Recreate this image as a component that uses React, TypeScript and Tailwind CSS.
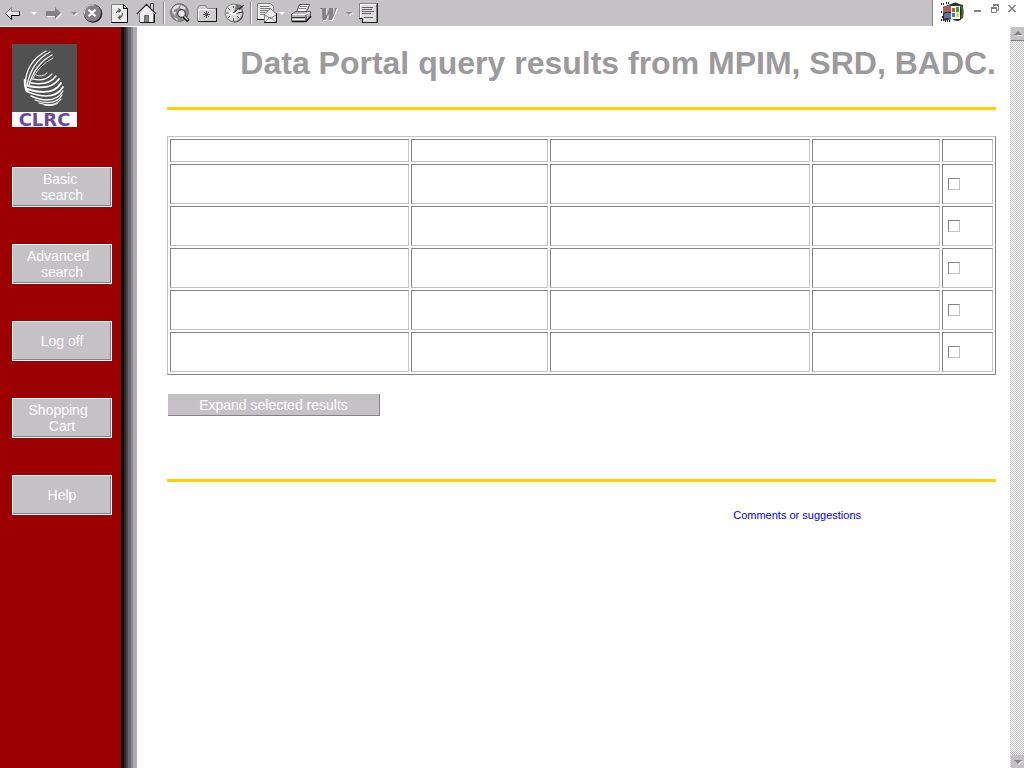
import React from "react";

type IconProps = { x: number; w: number; children: React.ReactNode };

/* Icons share the toolbar's coordinate space: x is where the button starts. */
function ToolButton({ x, w, label, children }: IconProps & { label: string }) {
  return (
    <button type="button" aria-label={label} className="h-[26px] shrink-0">
      <svg width={w} height={26} viewBox={`${x} 0 ${w} 26`} className="block">
        {children}
      </svg>
    </button>
  );
}

function Separator() {
  return (
    <div className="flex h-[26px] w-[6px] shrink-0 justify-center py-[2px]">
      <div className="w-px bg-[#848284]" />
      <div className="w-px bg-white" />
    </div>
  );
}

function Toolbar() {
  return (
    <header className="flex h-[27px] shrink-0 justify-between overflow-hidden border-b border-white bg-white">
      <div className="flex grow items-start border-r border-[#848284] bg-[#c5c2c5]" role="toolbar" aria-label="Browser">
        <ToolButton label="Back" x={0} w={27}>
          <path d="M5.5 13.5 L11.5 7.5 V11.5 H19.5 V15.5 H11.5 V19.5 Z" fill="#e8e8e8" stroke="#848284" />
          <path d="M5.5 13.5 L11.5 19.5 V15.5 H19.5 V11.5" fill="none" stroke="#000" />
        </ToolButton>
        <ToolButton label="Back history" x={27} w={13}>
          <path d="M31 12 H37 L34 15 Z" fill="#fff" />
        </ToolButton>
        <ToolButton label="Forward" x={40} w={27}>
          <path d="M47 12 H56 V8 L62 14 L56 20 V17 H47 Z" fill="#fff" />
          <path d="M46 11 H55 V7 L61 13 L55 19 V16 H46 Z" fill="#848284" />
        </ToolButton>
        <ToolButton label="Forward history" x={67} w={13}>
          <path d="M72 13 H78 L75 16 Z" fill="#fff" />
          <path d="M71 12 H77 L74 15 Z" fill="#848284" />
        </ToolButton>
        <ToolButton label="Stop" x={80} w={27}>
          <circle cx="93" cy="13.5" r="9.3" fill="#222" />
          <circle cx="92.3" cy="12.8" r="8.7" fill="#848284" />
          <path d="M84.5 14 A8 8 0 0 1 94 5" stroke="#ddd" fill="none" />
          <path d="M88.5 9.5 L95.5 16.5 M95.5 9.5 L88.5 16.5" stroke="#fff" strokeWidth="2.2" />
        </ToolButton>
        <ToolButton label="Refresh" x={107} w={27}>
          <path d="M111.5 4.5 H123.5 L127.5 8.5 V22.5 H111.5 Z" fill="#eee" stroke="#848284" />
          <path d="M111.5 22.5 H127.5 V8.5 H123.5 V4.5 L127.5 8.5" fill="none" stroke="#000" />
          <path d="M116.5 13 Q116.500 10.500 120 10.500 M118.500 8.500 L120.500 10.500 L118.500 12.500 M122.500 13 Q122.500 17.500 119 17.500 M120.500 15.500 L118.500 17.500 L120.500 19.500" fill="none" stroke="#555" strokeWidth="1.2" />
        </ToolButton>
        <ToolButton label="Home" x={134} w={27}>
          <path d="M150.5 10 V3.5 H153.5 V13" fill="#ddd" stroke="#444" />
          <path d="M139.5 13 V22.5 H153.5 V13 L146.5 5 Z" fill="#eee" stroke="#777" />
          <path d="M137 14 L146.5 4.5 L156 14" fill="none" stroke="#333" strokeWidth="1.5" />
          <path d="M139 13.500 L146.5 6 L154 13.500" fill="none" stroke="#fff" />
          <path d="M144.5 22 V15.5 H148.5 V22" fill="#848284" stroke="#666" />
          <path d="M154.5 14 V22.500 H140" fill="none" stroke="#111" />
        </ToolButton>
        <Separator />
        <ToolButton label="Search" x={167} w={27}>
          <circle cx="179.5" cy="12.5" r="8.8" fill="#8e8e8e" stroke="#666" />
          <path d="M172 9 Q176 4 180 5 L178 8 L174 10 L173 15 Z M181 5 L186 8 L184 10 L180 8 Z M174 17 L178 19 L177 21 Z M173 12 L176 12 L175 16 Z" fill="#ddd" />
          <path d="M184 16.500 L188.5 21" stroke="#000" strokeWidth="3.5" />
          <path d="M184 16 L188 20" stroke="#fff" strokeWidth="1.5" />
          <circle cx="181.5" cy="13.500" r="3.8" fill="#e7e7e7" stroke="#444" strokeWidth="1.2" />
        </ToolButton>
        <ToolButton label="Favorites" x={194} w={27}>
          <path d="M197.5 21.5 V8.5 L199.5 5.5 H205.5 L207.5 8.5 H216.5 V21.5 Z" fill="#cfcfcf" stroke="#848284" />
          <path d="M198.5 20 V9.5 H215" fill="none" stroke="#fff" />
          <path d="M198 21.5 H216.5 V8" fill="none" stroke="#111" />
          <path d="M206.5 11 V18 M203 14.5 H210 M204 12 L209 17 M209 12 L204 17" stroke="#555" />
        </ToolButton>
        <ToolButton label="History" x={221} w={27}>
          <circle cx="234.5" cy="13.5" r="9" fill="#333" />
          <circle cx="233.8" cy="12.8" r="8.7" fill="#ddd" stroke="#848284" />
          <path d="M234 13 L236 4 Q242 4 243 8 Z" fill="#777" />
          <path d="M233 13.500 L244 5 M233 14 L243 12" stroke="#222" strokeWidth="1.2" />
          <path d="M233.5 6 V8 M226 13 H229 M233.5 18 V21 M228 8 L230 10 M228 18 L230 16 M239 18 L237 16" stroke="#666" />
          <path d="M229 12 L234 14.500 L239 10" fill="none" stroke="#fff" strokeWidth="2" />
        </ToolButton>
        <Separator />
        <ToolButton label="Mail" x={254} w={24}>
          <path d="M257.5 3.5 H270.5 L273.5 6.5 V19.5 H257.5 Z" fill="#eee" stroke="#848284" />
          <path d="M260 6.5 H269 M260 8.5 H271 M260 10.5 H268 M260 12.5 H265 M260 14.5 H264" stroke="#777" />
          <path d="M257 19.500 H264" stroke="#222" />
          <path d="M264.5 14 L270.5 8.5 L276.5 14 V22.5 H264.5 Z" fill="#eee" stroke="#848284" />
          <path d="M265 15 L270.5 18.5 L276 15 M265 22 L270 17 L276 22" fill="none" stroke="#888" />
          <path d="M264 22.5 H276.5 V13" fill="none" stroke="#000" />
        </ToolButton>
        <ToolButton label="Mail menu" x={278} w={10}>
          <path d="M279 12 H285 L282 15 Z" fill="#fff" />
        </ToolButton>
        <ToolButton label="Print" x={288} w={27}>
          <path d="M296.5 12 L299.5 4.5 H309.5 L306.5 12 Z" fill="#fff" stroke="#555" />
          <path d="M300 6.5 H307 M299 8.5 H306" stroke="#848284" />
          <path d="M291.5 14 L296 11.5 H310.5 V17 L306 21.5 H291.5 Z" fill="#bbb" stroke="#555" />
          <path d="M292 14.5 H305 L310 12 M292 19.5 H305" fill="none" stroke="#fff" />
          <path d="M292 17.5 H305 M306 15 V21" fill="none" stroke="#333" />
          <path d="M292 21.5 H306 L311 16" fill="none" stroke="#111" strokeWidth="1.5" />
        </ToolButton>
        <ToolButton label="Edit" x={315} w={27}>
          <path d="M321 9 H327 L327 16 L330 9 H332 L333 16 L336 9 H338 L333 21 H329 L328 17 L326 21 H323 Z" fill="#fff" />
          <path d="M320 8 H326 V9 L326.5 16 L329 9 V8 H333 V9 L333 16 L335 9 V8 H337 L332 20 H328.5 V14 L326 20 H322.5 L321.5 9 H320 Z" fill="#848284" />
        </ToolButton>
        <ToolButton label="Edit menu" x={342} w={13}>
          <path d="M347 13 H353 L350 16 Z" fill="#fff" />
          <path d="M346 12 H352 L349 15 Z" fill="#848284" />
        </ToolButton>
        <ToolButton label="Discuss" x={355} w={27}>
          <path d="M359.5 3.5 H376.5 V22.5 H363 L359.5 19 Z" fill="#ddd" stroke="#848284" />
          <path d="M360.5 18 V4.5 H376" fill="none" stroke="#fff" />
          <path d="M362 7.5 H373 M362 9.5 H372 M362 11.5 H374 M362 13.5 H371 M364 17.5 H373" stroke="#666" />
          <path d="M362 22.5 H377.5 V3 M359 18.5 H362.5 V22" fill="none" stroke="#222" />
        </ToolButton>
      </div>
      <div className="flex w-[91px] shrink-0">
        <svg width={37} height={26} viewBox="933 0 37 26" className="block">
          <path d="M951 4 Q956 1 959 4 L963 5 V17 Q959 24 952 19 L943 21 V7 Z" fill="#2a3326" />
          <path d="M941 4 H944 M943 8 H946 M941 12 H945 M942 17 H946 M941 20 H944 M946 3 H950 M945 21 H951" stroke="#202050" strokeWidth="2" strokeDasharray="1 1" />
          <path d="M943 8 Q947 4 951 6 V12 Q947 11 943 13 Z" fill="#a8625a" />
          <path d="M944 14 Q947 12 951 13 V19 Q947 17 944 19 Z" fill="#6272a0" />
          <path d="M951 6 H960 V19 H951 Z" fill="#fff" />
          <path d="M952 8 H955 V12 H952 Z" fill="#f04410" />
          <path d="M956 7 H959 V12 H956 Z" fill="#23a83d" />
          <path d="M952 13 H955 V17 H952 Z" fill="#1689d5" />
          <path d="M956 13 H959 V17 H956 Z" fill="#f5d50b" />
          <path d="M961 6 Q964 9 962 18" fill="none" stroke="#4c6c40" strokeWidth="2" />
        </svg>
        <ToolButton label="Minimize" x={970} w={16}>
          <path d="M974 11 H981" stroke="#848284" strokeWidth="2" />
        </ToolButton>
        <ToolButton label="Restore" x={986} w={16}>
          <path d="M993.5 7 V5 H998.5 V10.5 H997" fill="none" stroke="#848284" />
          <path d="M991.5 8 V12.5 H996.5 V8" fill="none" stroke="#848284" />
          <path d="M991 8 H997 M993 5 H999" stroke="#848284" strokeWidth="2" />
        </ToolButton>
        <ToolButton label="Close" x={1002} w={22}>
          <path d="M1008.5 5 L1015.5 12 M1015.5 5 L1008.5 12" stroke="#848284" strokeWidth="1.6" />
        </ToolButton>
      </div>
    </header>
  );
}

function Logo() {
  return (
    <div className="w-[65px] bg-white">
      <svg width={65} height={68} viewBox="12 44 65 68" aria-hidden="true" className="block bg-[#525152]">
        <g fill="none" stroke="#fff" strokeLinecap="round">
          <path d="M46 51 Q26 62 25 85" strokeWidth="1.3" />
          <path d="M50 52 Q31 62 27 86" strokeWidth="1.4" />
          <path d="M52 55 Q35 64 29 85" strokeWidth="1.3" />
          <path d="M53 58 Q38 66 32 80" strokeWidth="0.8" />
          <path d="M25 80 Q25 88 27 91" strokeWidth="2.5" />
          <path d="M36 75 Q42 78 47 73" strokeWidth="0.9" />
          <path d="M33 79 Q45 82 52 74" strokeWidth="1.2" />
          <path d="M31 83 Q49 86 56 76" strokeWidth="1.5" />
          <path d="M28 86 Q51 91 59 79" strokeWidth="1.8" />
          <path d="M27 89 Q53 97 61 83" strokeWidth="1.9" />
          <path d="M28 92 Q54 102 63 87" strokeWidth="1.7" />
          <path d="M31 96 Q54 106 63 91" strokeWidth="1.4" />
          <path d="M35 100 Q55 107 62 95" strokeWidth="1.2" />
          <path d="M39 103 Q54 108 61 99" strokeWidth="1.1" />
          <path d="M44 105 Q53 107 58 103" strokeWidth="0.9" />
        </g>
      </svg>
      <div className="text-center font-['DejaVu_Sans',sans-serif] text-[18px] leading-[15px] font-bold text-[#6b499c]">
        CLRC
      </div>
    </div>
  );
}

const navItems = ["Basic\u00a0\nsearch", "Advanced\u00a0\u00a0\nsearch", "Log off", "Shopping\u00a0\u00a0\nCart", "Help"];

function Sidebar() {
  return (
    <div className="flex shrink-0">
      <nav className="flex w-[121px] flex-col items-start bg-[#9c0000] pt-[17px] pl-3">
        <Logo />
        <div className="mt-10 flex flex-col gap-[37px]">
          {navItems.map((label) => (
            <button
              key={label}
              type="button"
              className="flex h-10 w-[100px] items-center justify-center border border-white bg-[#c5c2c5] text-center text-[14px] leading-4 whitespace-pre text-white shadow-[inset_-1px_-1px_0_#848284]"
            >
              {label}
            </button>
          ))}
        </div>
      </nav>
      <div className="w-[3px] bg-[#080808]" />
      <div className="w-[2px] bg-[#292829]" />
      <div className="w-[2px] bg-[#4a494a]" />
      <div className="w-[3px] bg-[#6b696b]" />
      <div className="w-[2px] bg-[#8c8a8c]" />
      <div className="w-[4px] bg-[#adaaad]" />
    </div>
  );
}

const cell = "border border-t-[#848284] border-r-[#c5c2c5] border-b-[#c5c2c5] border-l-[#848284]";

function Results() {
  return (
    <table className="mt-[26px] w-full table-fixed border-separate border-spacing-[2px] border border-t-[#c5c2c5] border-r-[#848284] border-b-[#848284] border-l-[#c5c2c5]">
      <colgroup>
        <col className="w-[239px]" />
        <col className="w-[137px]" />
        <col />
        <col className="w-[128px]" />
        <col className="w-[51px]" />
      </colgroup>
      <thead>
        <tr className="h-[23px]">
          {[0, 1, 2, 3, 4].map((c) => (
            <th key={c} className={cell} />
          ))}
        </tr>
      </thead>
      <tbody>
        {[1, 2, 3, 4, 5].map((row) => (
          <tr key={row} className="h-10">
            {[0, 1, 2, 3].map((c) => (
              <td key={c} className={cell} />
            ))}
            <td className={`${cell} pl-[5px] align-middle`}>
              <input
                type="checkbox"
                aria-label={`Select result ${row}`}
                className="block size-3 appearance-none border border-t-[#848284] border-r-[#c5c2c5] border-b-[#c5c2c5] border-l-[#848284] bg-white checked:bg-[#848284]"
              />
            </td>
          </tr>
        ))}
      </tbody>
    </table>
  );
}

function ScrollBar() {
  return (
    <div className="flex w-[14px] shrink-0 flex-col items-end justify-between bg-[repeating-conic-gradient(#c5c2c5_0_25%,#fff_0_50%)] bg-[length:2px_2px]">
      <button type="button" aria-label="Scroll up" className="h-[14px] w-[13px] border-b border-[#848284] bg-[#c5c2c5]">
        <svg width={13} height={13} viewBox="0 0 13 13" className="block">
          <path d="M4 9 H12 L11 8 Z" fill="#fff" />
          <path d="M3 8 H11 L7 4 Z" fill="#848284" />
        </svg>
      </button>
      <button type="button" aria-label="Scroll down" className="h-[13px] w-[13px] bg-[#c5c2c5]">
        <svg width={13} height={13} viewBox="0 0 13 13" className="block">
          <path d="M4 6 H12 L8 10 Z" fill="#fff" />
          <path d="M3 5 H11 L7 9 Z" fill="#848284" />
        </svg>
      </button>
    </div>
  );
}

export default function App() {
  return (
    <div className="flex min-h-screen flex-col bg-white font-['Liberation_Sans',Arial,sans-serif]">
      <Toolbar />
      <div className="flex grow">
        <Sidebar />
        <main className="min-w-0 grow pr-[14px] pl-[30px]">
          <h1 className="pt-4 text-right text-[32px] leading-10 font-bold text-[#9c9a9c]">
            Data Portal query results from MPIM, SRD, BADC.
          </h1>
          <hr className="mt-6 border-t-[3px] border-[#ffcf00]" />
          <Results />
          <button
            type="button"
            className="mt-[19px] ml-px block h-[22px] w-[212px] border-r border-b border-[#848284] bg-[#c5c2c5] text-[14px] leading-5 text-white"
          >
            Expand selected results
          </button>
          <hr className="mt-[63px] border-t-[3px] border-[#ffcf00]" />
          <div className="mt-[25px] pr-[135px] text-right text-[11px] leading-4">
            <a href="#comments" className="text-[#0000ff]">
              Comments or suggestions
            </a>
          </div>
        </main>
        <ScrollBar />
      </div>
    </div>
  );
}
